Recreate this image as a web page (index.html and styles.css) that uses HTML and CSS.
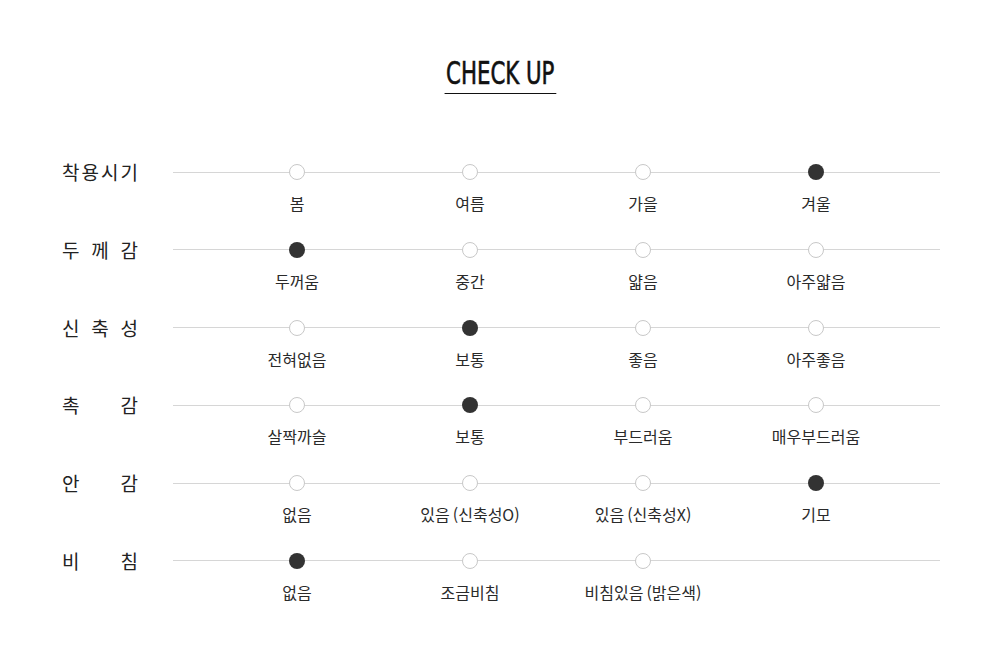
FILE: index.html
```html
<!DOCTYPE html>
<html lang="ko">
<head>
<meta charset="utf-8">
<title>CHECK UP</title>
<link rel="stylesheet" href="styles.css">
</head>
<body>
<main class="checkup">
  <h2 class="title"><span class="title-text">CHECK UP</span></h2>
  <div class="rows">
    <div class="row">
      <div class="label"><span>착</span><span>용</span><span>시</span><span>기</span></div>
      <div class="track">
        <div class="opt"><span class="dot"></span><span class="txt">봄</span></div>
        <div class="opt"><span class="dot"></span><span class="txt">여름</span></div>
        <div class="opt"><span class="dot"></span><span class="txt">가을</span></div>
        <div class="opt"><span class="dot on"></span><span class="txt">겨울</span></div>
      </div>
    </div>
    <div class="row">
      <div class="label"><span>두</span><span>께</span><span>감</span></div>
      <div class="track">
        <div class="opt"><span class="dot on"></span><span class="txt">두꺼움</span></div>
        <div class="opt"><span class="dot"></span><span class="txt">중간</span></div>
        <div class="opt"><span class="dot"></span><span class="txt">얇음</span></div>
        <div class="opt"><span class="dot"></span><span class="txt">아주얇음</span></div>
      </div>
    </div>
    <div class="row">
      <div class="label"><span>신</span><span>축</span><span>성</span></div>
      <div class="track">
        <div class="opt"><span class="dot"></span><span class="txt">전혀없음</span></div>
        <div class="opt"><span class="dot on"></span><span class="txt">보통</span></div>
        <div class="opt"><span class="dot"></span><span class="txt">좋음</span></div>
        <div class="opt"><span class="dot"></span><span class="txt">아주좋음</span></div>
      </div>
    </div>
    <div class="row">
      <div class="label"><span>촉</span><span>감</span></div>
      <div class="track">
        <div class="opt"><span class="dot"></span><span class="txt">살짝까슬</span></div>
        <div class="opt"><span class="dot on"></span><span class="txt">보통</span></div>
        <div class="opt"><span class="dot"></span><span class="txt">부드러움</span></div>
        <div class="opt"><span class="dot"></span><span class="txt">매우부드러움</span></div>
      </div>
    </div>
    <div class="row">
      <div class="label"><span>안</span><span>감</span></div>
      <div class="track">
        <div class="opt"><span class="dot"></span><span class="txt">없음</span></div>
        <div class="opt"><span class="dot"></span><span class="txt">있음<span class="gap"></span>(신축성O)</span></div>
        <div class="opt"><span class="dot"></span><span class="txt">있음<span class="gap"></span>(신축성X)</span></div>
        <div class="opt"><span class="dot on"></span><span class="txt">기모</span></div>
      </div>
    </div>
    <div class="row">
      <div class="label"><span>비</span><span>침</span></div>
      <div class="track">
        <div class="opt"><span class="dot on"></span><span class="txt">없음</span></div>
        <div class="opt"><span class="dot"></span><span class="txt">조금비침</span></div>
        <div class="opt"><span class="dot"></span><span class="txt">비침있음<span class="gap"></span>(밝은색)</span></div>
      </div>
    </div>
  </div>
</main>
</body>
</html>
```
FILE: styles.css
```css
html, body {
  margin: 0;
  padding: 0;
  background: #fff;
}
body {
  font-family: "Noto Sans CJK KR", "Noto Sans", sans-serif;
  color: #333;
}
.checkup {
  width: 1000px;
  height: 661px;
  box-sizing: border-box;
  padding-top: 57px;
}
.title {
  margin: 0;
  text-align: center;
  font-weight: normal;
  line-height: 1;
}
.title-text {
  display: inline-block;
  font-family: "Liberation Sans Narrow", "DejaVu Sans Condensed", sans-serif;
  font-size: 32px;
  line-height: 32px;
  color: #111;
  -webkit-text-stroke: 0.6px #111;
  transform: scaleX(0.74);
  padding: 0 2px 4px;
  border-bottom: 1.5px solid #111;
}
.rows {
  margin-top: 70px;
  padding-left: 62px;
}
.row {
  display: grid;
  grid-template-columns: 111px 767px;
  height: 77.8px;
  align-items: start;
}
.label {
  width: 76px;
  display: flex;
  justify-content: space-between;
  font-size: 19px;
  line-height: 16px;
  color: #222;
  white-space: nowrap;
}
.track {
  position: relative;
  display: grid;
  grid-template-columns: repeat(4, 173px);
  padding: 0 37.5px;
}
.track::before {
  content: "";
  position: absolute;
  left: 0;
  right: 0;
  top: 7.5px;
  height: 1px;
  background: #d6d6d6;
}
.opt {
  display: flex;
  flex-direction: column;
  align-items: center;
  position: relative;
}
.dot {
  width: 14px;
  height: 14px;
  border: 1px solid #c8c8c8;
  border-radius: 50%;
  background: #fff;
}
.dot.on {
  width: 16px;
  height: 16px;
  border: 0;
  background: #333;
}
.txt {
  margin-top: 11px;
  font-size: 16px;
  line-height: 24px;
  color: #2a2a2a;
  white-space: nowrap;
}
.gap {
  display: inline-block;
  width: 3px;
}
```
